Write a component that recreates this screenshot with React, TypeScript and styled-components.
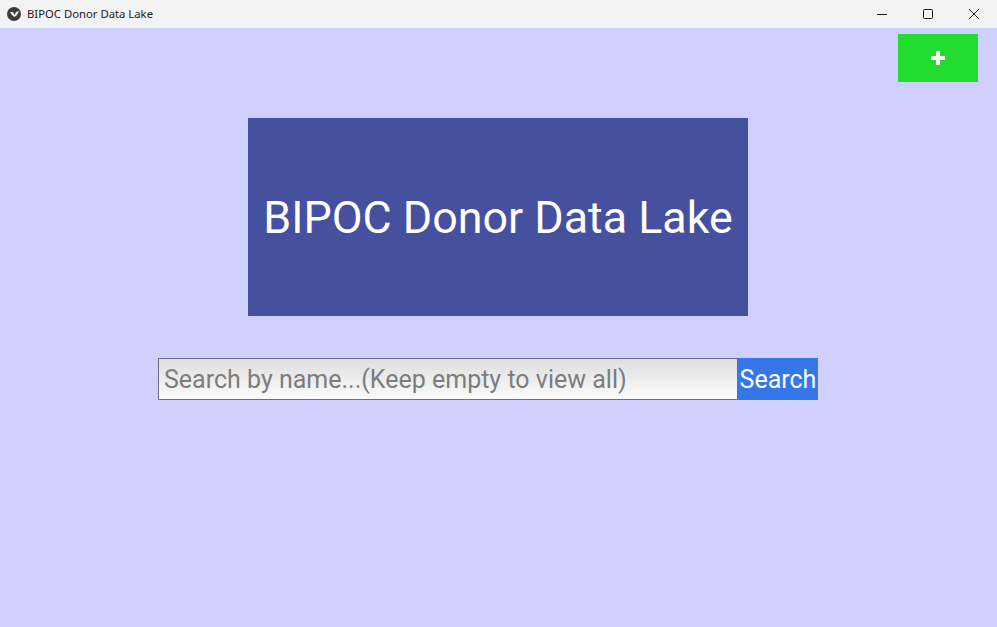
import styled, { createGlobalStyle } from 'styled-components';

const GlobalStyle = createGlobalStyle`
  html, body {
    margin: 0;
    padding: 0;
    height: 100%;
    overflow: hidden;
  }
  #root {
    height: 100%;
  }
`;

const Window = styled.div`
  display: flex;
  flex-direction: column;
  width: 997px;
  height: 627px;
  background: #d0d0fe;
`;

const TitleBar = styled.header`
  display: flex;
  align-items: center;
  height: 28px;
  flex: 0 0 28px;
  background: #f3f3f3;
  font-family: 'Noto Sans', 'DejaVu Sans', sans-serif;
  font-size: 11.3px;
  color: #1a1a1a;
`;

const AppIcon = styled.span`
  display: flex;
  align-items: center;
  justify-content: center;
  width: 14px;
  height: 14px;
  margin: 0 6px 0 7px;
  border-radius: 50%;
  background: #3c3c3c;
`;

const WindowTitle = styled.span`
  flex: 1;
  line-height: 1;
`;

const Controls = styled.div`
  display: flex;
  height: 100%;
`;

const ControlButton = styled.button`
  display: flex;
  align-items: center;
  justify-content: center;
  width: 46px;
  height: 100%;
  border: 0;
  padding: 0;
  background: transparent;
`;

const Stage = styled.main`
  display: flex;
  flex-direction: column;
  align-items: center;
  flex: 1;
  position: relative;
`;

const AddButton = styled.button`
  position: absolute;
  top: 6px;
  right: 19px;
  width: 80px;
  height: 48px;
  display: flex;
  align-items: center;
  justify-content: center;
  border: 0;
  background: #22dd2f;
`;

const Banner = styled.div`
  display: flex;
  align-items: center;
  justify-content: center;
  width: 500px;
  height: 198px;
  margin: 90px 1px 0 0;
  background: #45509f;
  color: #ffffff;
  font-family: Roboto, 'Liberation Sans', sans-serif;
  font-size: 44.8px;
`;

const SearchRow = styled.form`
  display: flex;
  margin: 42px 21px 0 0;
  height: 42px;
`;

const SearchInput = styled.input`
  box-sizing: border-box;
  width: 580px;
  height: 42px;
  padding: 0 5px;
  border: 1px solid #6e6e80;
  background: linear-gradient(#dedede, #fbfbfb);
  font-family: Roboto, 'Liberation Sans', sans-serif;
  font-size: 25px;
  color: #333;
  outline: none;
  &::placeholder {
    color: #7d7d7d;
  }
`;

const SearchButton = styled.button`
  width: 80px;
  height: 42px;
  padding: 0;
  border: 0;
  background: #3377ea;
  color: #ffffff;
  font-family: Roboto, 'Liberation Sans', sans-serif;
  font-size: 25px;
`;

export default function App() {
  return (
    <>
      <GlobalStyle />
      <Window>
        <TitleBar>
          <AppIcon>
            <svg width="9" height="7" viewBox="0 0 9 7">
              <path d="M0 1 L3 1 L4.5 4 L6 1 L9 0 L7 4 L4.5 6 L2 4 Z" fill="#f3f3f3" />
            </svg>
          </AppIcon>
          <WindowTitle>BIPOC Donor Data Lake</WindowTitle>
          <Controls>
            <ControlButton aria-label="Minimize">
              <svg width="10" height="10" viewBox="0 0 10 10">
                <path d="M0 5.5 H10" stroke="#1a1a1a" strokeWidth="1" />
              </svg>
            </ControlButton>
            <ControlButton aria-label="Maximize">
              <svg width="10" height="10" viewBox="0 0 10 10">
                <rect x="0.5" y="0.5" width="9" height="9" rx="1" fill="none" stroke="#1a1a1a" strokeWidth="1" />
              </svg>
            </ControlButton>
            <ControlButton aria-label="Close">
              <svg width="10" height="10" viewBox="0 0 10 10">
                <path d="M0 0 L10 10 M10 0 L0 10" stroke="#1a1a1a" strokeWidth="1" />
              </svg>
            </ControlButton>
          </Controls>
        </TitleBar>
        <Stage>
          <AddButton aria-label="Add donor">
            <svg width="14" height="14" viewBox="0 0 14 14">
              <path d="M7 0 V14 M0 7 H14" stroke="#ffffff" strokeWidth="4" />
            </svg>
          </AddButton>
          <Banner>BIPOC Donor Data Lake</Banner>
          <SearchRow onSubmit={(e) => e.preventDefault()}>
            <SearchInput placeholder="Search by name...(Keep empty to view all)" />
            <SearchButton type="submit">Search</SearchButton>
          </SearchRow>
        </Stage>
      </Window>
    </>
  );
}
